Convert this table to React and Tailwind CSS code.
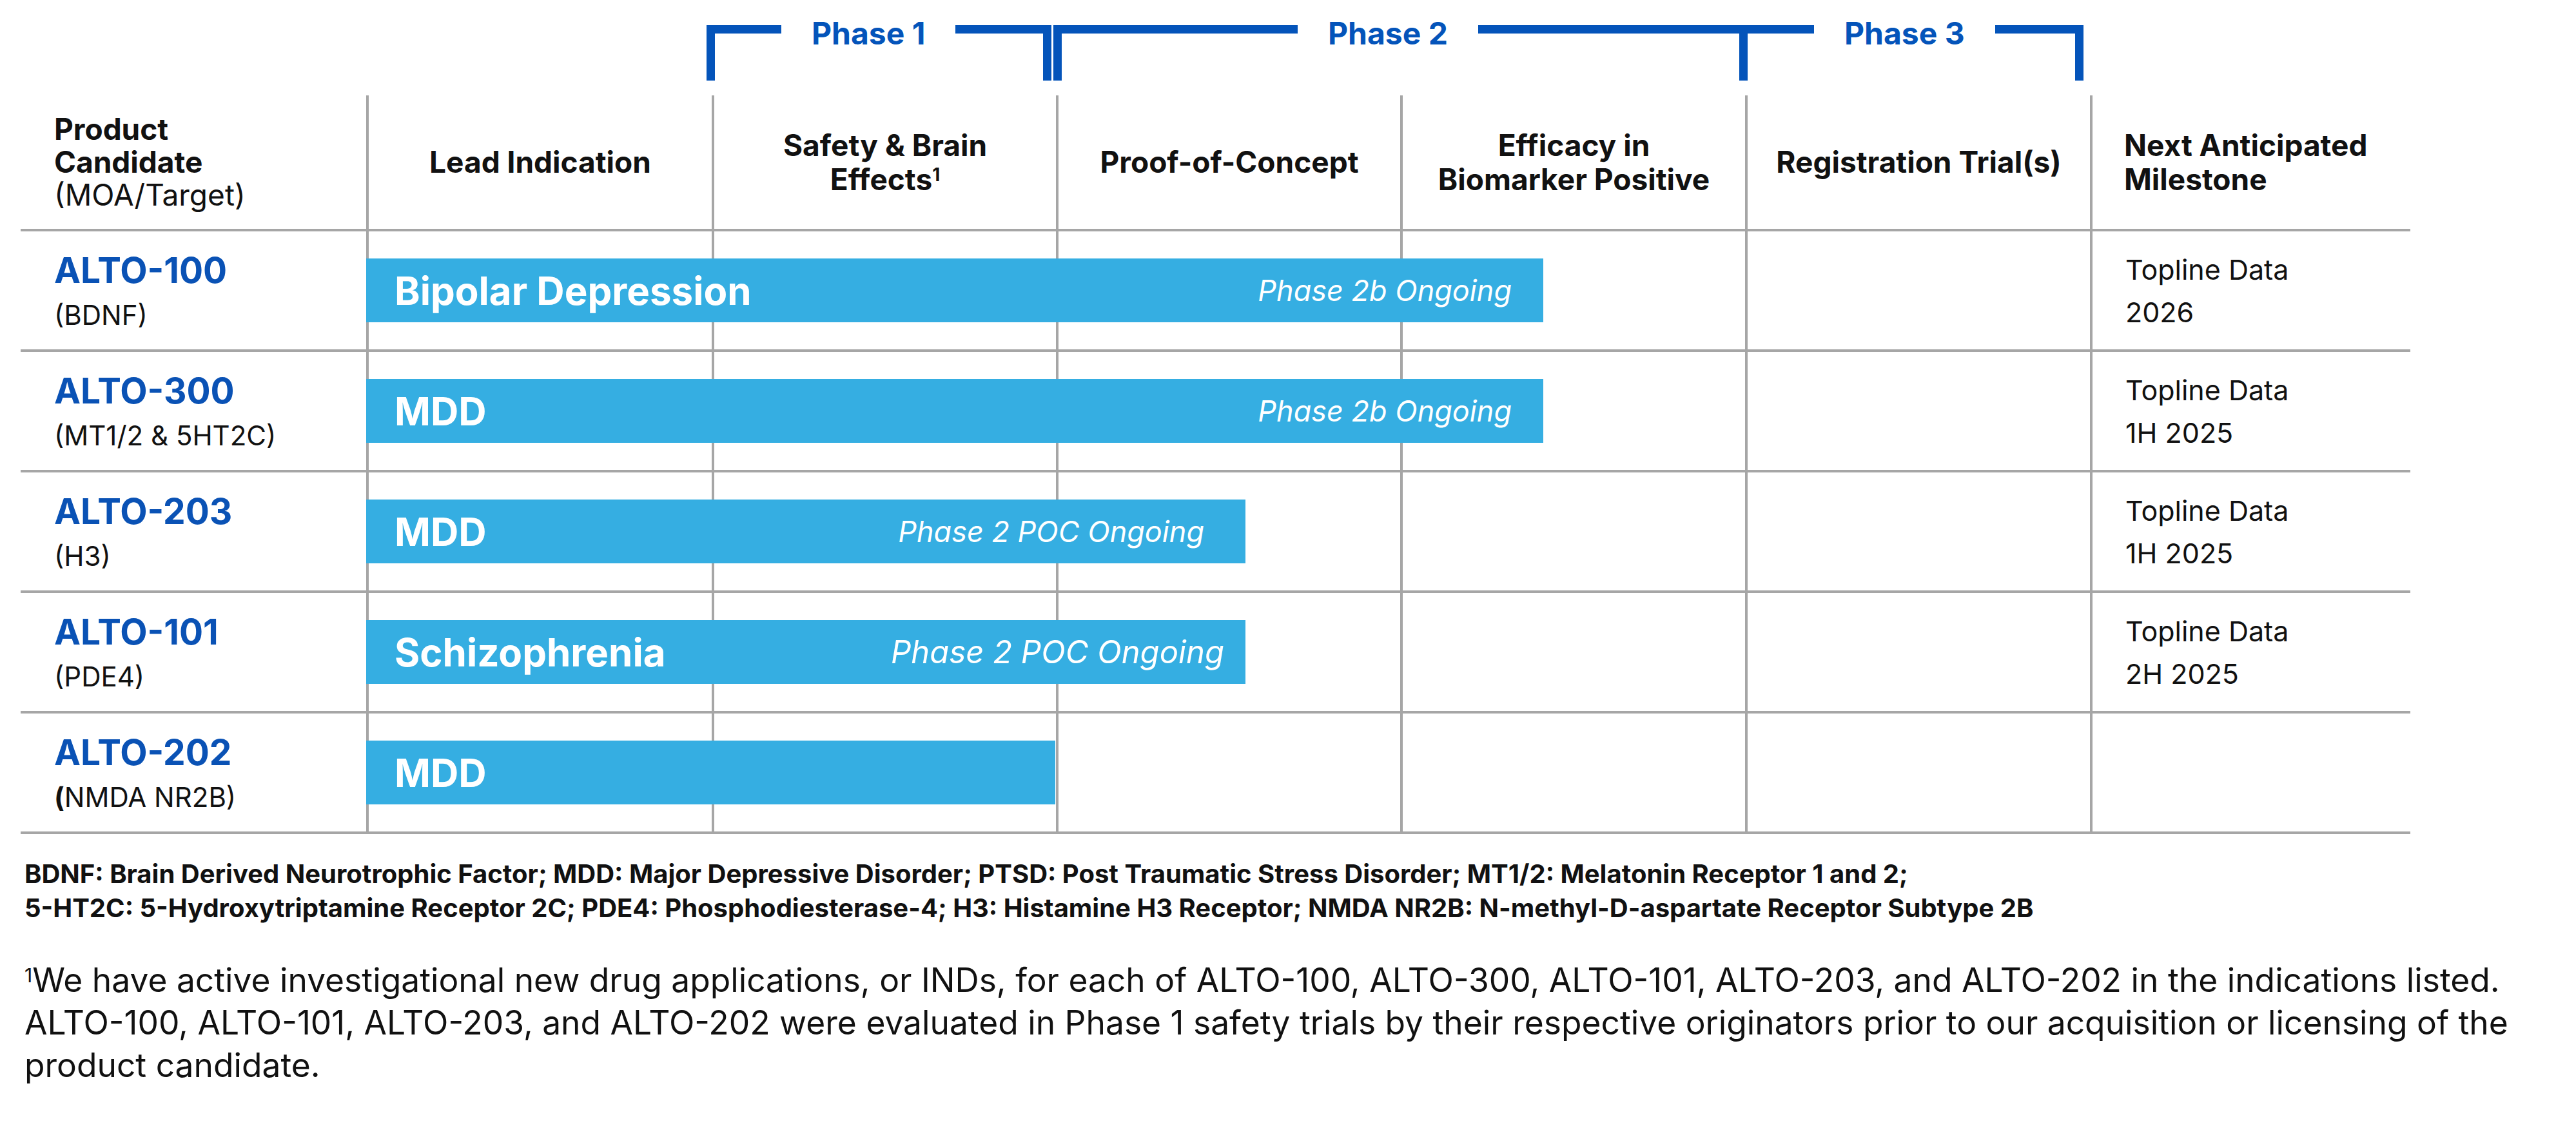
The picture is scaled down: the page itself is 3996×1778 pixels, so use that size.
const rows = [
  { name: 'ALTO-100', target: '(BDNF)', label: 'Bipolar Depression', status: 'Phase 2b Ongoing', width: 1826, pr: 'pr-[49px]', size: 'text-[45px]', milestone: ['Topline Data', '2026'] },
  { name: 'ALTO-300', target: '(MT1/2 & 5HT2C)', label: 'MDD', status: 'Phase 2b Ongoing', width: 1826, pr: 'pr-[49px]', size: 'text-[45px]', milestone: ['Topline Data', '1H 2025'] },
  { name: 'ALTO-203', target: '(H3)', label: 'MDD', status: 'Phase 2 POC Ongoing', width: 1364, pr: 'pr-[64px]', size: 'text-[45px]', milestone: ['Topline Data', '1H 2025'] },
  { name: 'ALTO-101', target: '(PDE4)', label: 'Schizophrenia', status: 'Phase 2 POC Ongoing', width: 1364, pr: 'pr-[33px]', size: 'text-[49px]', milestone: ['Topline Data', '2H 2025'] },
  { name: 'ALTO-202', target: 'NMDA NR2B)', boldParen: true, label: 'MDD', status: null, width: 1069, pr: 'pr-[40px]', size: 'text-[45px]', milestone: null },
];

const cols = 'grid grid-cols-[536px_536px_534px_534px_535px_535px_497px]';
const line = 'border-l-4 border-[#a6a6a6]';

function Bracket({ label, className, labelLeft }) {
  return (
    <div className={`relative h-[86px] border-t-[13px] border-[#0454ba] ${className}`}>
      <div
        className={`absolute top-[-24px] bg-white px-[47px] text-[48px] font-bold leading-none text-[#0454ba] whitespace-nowrap ${labelLeft}`}
      >
        {label}
      </div>
    </div>
  );
}

function HeaderCell({ children, left }) {
  return (
    <div className={`${line} flex items-center ${left ? 'justify-start pl-[49px] text-left' : 'justify-center text-center'}`}>
      <div className="text-[46px] font-bold leading-[53px] text-[#111]">{children}</div>
    </div>
  );
}

export default function App() {
  return (
    <div className="w-[3996px] h-[1778px] bg-white pl-[32px] pt-[39px] font-['Inter',sans-serif] text-[#111]">
      {/* phase brackets */}
      <div className="flex ml-[1064px]">
        <Bracket label="Phase 1" className="w-[535px] border-x-[13px]" labelLeft="left-[103px]" />
        <Bracket label="Phase 2" className="ml-[3px] w-[1064px] border-l-[13px]" labelLeft="left-[366px]" />
        <Bracket label="Phase 3" className="w-[534px] border-x-[13px]" labelLeft="left-[103px]" />
      </div>

      <div className="mt-[23px] w-[3707px]">
        {/* header */}
        <div className={`${cols} h-[211px] border-b-4 border-[#a6a6a6]`}>
          <div className="flex flex-col justify-center pl-[52px] text-[46px] leading-[51px]">
            <div className="font-bold">Product</div>
            <div className="font-bold">Candidate</div>
            <div>(MOA/Target)</div>
          </div>
          <HeaderCell>Lead Indication</HeaderCell>
          <HeaderCell>
            Safety &amp; Brain<br />
            Effects<sup className="text-[28px]">1</sup>
          </HeaderCell>
          <HeaderCell>Proof-of-Concept</HeaderCell>
          <HeaderCell>
            Efficacy in<br />Biomarker Positive
          </HeaderCell>
          <HeaderCell>Registration Trial(s)</HeaderCell>
          <HeaderCell left>
            Next Anticipated<br />Milestone
          </HeaderCell>
        </div>

        {/* rows */}
        {rows.map((r) => (
          <div key={r.name} className={`${cols} h-[187px] border-b-4 border-[#a6a6a6]`}>
            <div className="col-start-1 row-start-1 flex flex-col justify-center pl-[52px]">
              <div className="text-[55px] font-bold leading-[64px] text-[#0a52b5]">{r.name}</div>
              <div className="mt-[13px] text-[42px] leading-[50px]">
                {r.boldParen && <span className="font-bold">(</span>}
                {r.target}
              </div>
            </div>
            <div className={`col-start-2 row-start-1 ${line}`} />
            <div className={`col-start-3 row-start-1 ${line}`} />
            <div className={`col-start-4 row-start-1 ${line}`} />
            <div className={`col-start-5 row-start-1 ${line}`} />
            <div className={`col-start-6 row-start-1 ${line}`} />
            <div className={`col-start-7 row-start-1 ${line} flex flex-col justify-center pl-[51px] text-[43px] leading-[66px]`}>
              {r.milestone && r.milestone.map((m) => <div key={m}>{m}</div>)}
            </div>
            <div
              className={`col-start-2 col-end-8 row-start-1 self-center h-[99px] bg-[#35aee2] flex items-center justify-between pl-[44px] ${r.pr} text-white`}
              style={{ width: r.width }}
            >
              <span className="text-[60px] font-bold leading-none">{r.label}</span>
              {r.status && <span className={`${r.size} italic leading-none`}>{r.status}</span>}
            </div>
          </div>
        ))}
      </div>

      {/* abbreviations */}
      <div className="mt-[35px] pl-[6px] text-[40px] font-bold leading-[53px] whitespace-nowrap">
        <div>BDNF: Brain Derived Neurotrophic Factor; MDD: Major Depressive Disorder; PTSD: Post Traumatic Stress Disorder; MT1/2: Melatonin Receptor 1 and 2;</div>
        <div>5-HT2C: 5-Hydroxytriptamine Receptor 2C; PDE4: Phosphodiesterase-4; H3: Histamine H3 Receptor; NMDA NR2B: N-methyl-D-aspartate Receptor Subtype 2B</div>
      </div>

      {/* footnote */}
      <div className="mt-[52px] pl-[6px] text-[51.5px] leading-[66px] whitespace-nowrap">
        <div>
          <sup className="text-[30px]">1</sup>We have active investigational new drug applications, or INDs, for each of ALTO-100, ALTO-300, ALTO-101, ALTO-203, and ALTO-202 in the indications listed.
        </div>
        <div>ALTO-100, ALTO-101, ALTO-203, and ALTO-202 were evaluated in Phase 1 safety trials by their respective originators prior to our acquisition or licensing of the</div>
        <div>product candidate.</div>
      </div>
    </div>
  );
}
